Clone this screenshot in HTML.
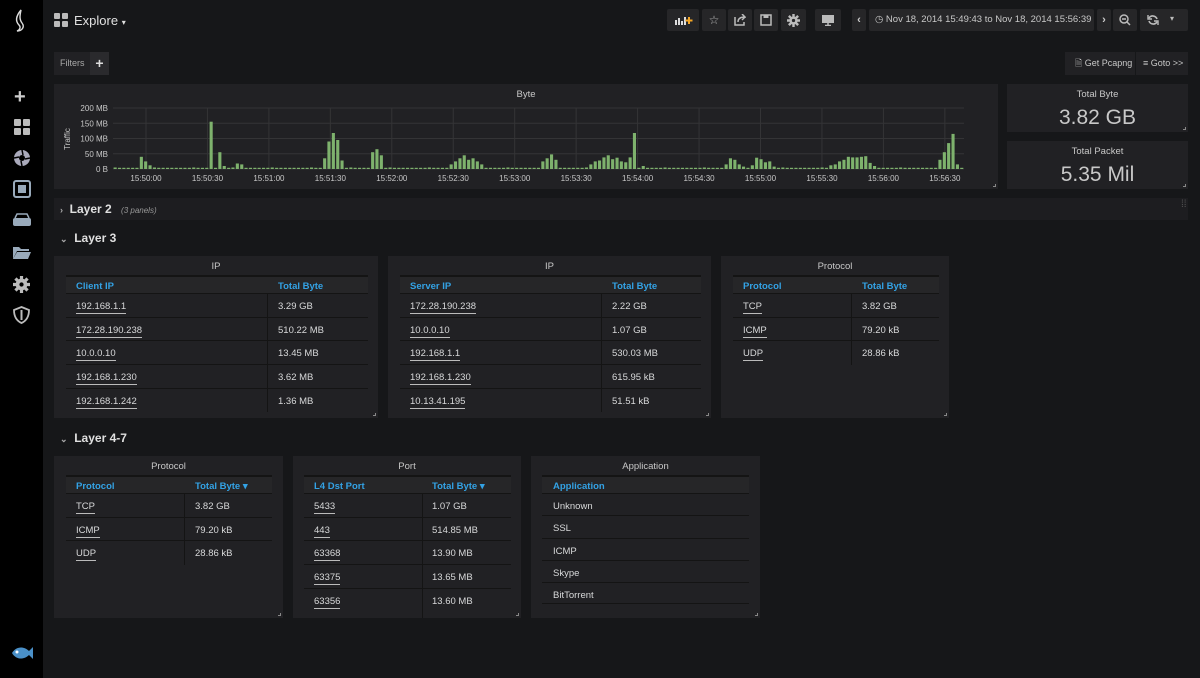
<!DOCTYPE html>
<html><head><meta charset="utf-8">
<style>
*{box-sizing:border-box;margin:0;padding:0}
body{width:1200px;height:678px;background:#161719;font-family:"Liberation Sans",sans-serif;color:#d8d9da;position:relative;overflow:hidden;font-size:10px}
.abs{position:absolute}
.side{left:0;top:0;width:43px;height:678px;background:#000}
.btn{position:absolute;top:9px;height:22px;background:#262628;border-radius:2px}
.panel{position:absolute;background:#212124}
.ptitle{position:absolute;left:0;right:0;top:5px;text-align:center;color:#c8c8c8;font-size:9.5px}
.tbl{position:absolute}
.tbl .h{height:18px;background:#262628;border-top:2px solid #141414;color:#33a2e5;font-size:9.5px;font-weight:bold;position:relative}
.tbl .r{height:23.7px;border-top:1px solid #141414;position:relative;font-size:9.5px;color:#d8d9da}
.tbl span{position:absolute;top:7px}
.u{border-bottom:1px solid #bbb;padding-bottom:1px}
.corner{position:absolute;right:2px;bottom:2px;width:3px;height:3px;border-right:1px solid #888;border-bottom:1px solid #888}
.rowt{position:absolute;font-size:12px;font-weight:bold;color:#e0e0e0}
</style></head><body>
<div class="abs side">
 <svg class="abs" style="left:12px;top:8px" width="18" height="26" viewBox="0 0 18 26"><path d="M9 2 C4 8 3 13 7 17 C9 19 8 22 5 23 C10 23 13 19 10 15 C7 11 8 7 9 2 Z" fill="none" stroke="#ddd" stroke-width="1.4"/></svg>
 <div class="abs" style="left:14px;top:86px;color:#ccc;font-size:20px;font-weight:bold">+</div>
 <svg class="abs" style="left:14px;top:119px" width="16" height="16"><rect x="0" y="0" width="7" height="7" rx="1" fill="#bbb"/><rect x="9" y="0" width="7" height="7" rx="1" fill="#bbb"/><rect x="0" y="9" width="7" height="7" rx="1" fill="#bbb"/><rect x="9" y="9" width="7" height="7" rx="1" fill="#bbb"/></svg>
 <svg class="abs" style="left:13px;top:149px" width="18" height="18"><circle cx="9" cy="9" r="8" fill="#aab"/><circle cx="9" cy="9" r="3" fill="#000"/><path d="M9 1 L10 6 M17 9 L12 10 M9 17 L8 12 M1 9 L6 8" stroke="#000" stroke-width="1.5"/></svg>
 <svg class="abs" style="left:13px;top:180px" width="18" height="18"><rect x="1" y="1" width="16" height="16" rx="2" fill="none" stroke="#9ab" stroke-width="2"/><rect x="5" y="5" width="8" height="8" fill="#9ab"/></svg>
 <svg class="abs" style="left:12px;top:213px" width="20" height="14"><rect x="1" y="5" width="18" height="8" rx="2" fill="#9ab"/><path d="M3 5 L5 1 H15 L17 5" fill="none" stroke="#9ab" stroke-width="1.5"/></svg>
 <svg class="abs" style="left:12px;top:245px" width="20" height="15"><path d="M1 2 H7 L9 4 H17 V6 H5 L1 14 Z" fill="#9ab"/><path d="M5 7 H19 L16 14 H1 Z" fill="#9ab"/></svg>
 <svg class="abs" style="left:13px;top:276px" width="17" height="17" viewBox="0 0 16 16"><circle cx="8" cy="8" r="5.5" fill="#bbb"/><path d="M8 0v16M0 8h16M2.3 2.3l11.4 11.4M13.7 2.3L2.3 13.7" stroke="#bbb" stroke-width="3"/><circle cx="8" cy="8" r="2" fill="#000"/></svg>
 <svg class="abs" style="left:13px;top:306px" width="17" height="18"><path d="M8.5 1 L16 4 C16 11 13 15 8.5 17 C4 15 1 11 1 4 Z" fill="none" stroke="#bbb" stroke-width="1.8"/><path d="M8.5 4 V14" stroke="#bbb" stroke-width="2"/></svg>
 <svg class="abs" style="left:10px;top:643px" width="24" height="20"><path d="M2 10 C6 3 14 3 19 8 L23 4 V16 L19 12 C14 17 6 17 2 10Z" fill="#4a90c8"/><circle cx="7" cy="9" r="1.5" fill="#fff"/></svg>
</div>

<svg class="abs" style="left:54px;top:13px" width="14" height="14"><rect x="0" y="0" width="6" height="6" rx="1" fill="#bbb"/><rect x="8" y="0" width="6" height="6" rx="1" fill="#bbb"/><rect x="0" y="8" width="6" height="6" rx="1" fill="#bbb"/><rect x="8" y="8" width="6" height="6" rx="1" fill="#bbb"/></svg>
<div class="abs" style="left:74px;top:13px;font-size:13px;color:#e0e0e0">Explore <span style="font-size:8px">▾</span></div>

<div class="btn" style="left:667px;width:32px"><svg class="abs" style="left:8px;top:6px" width="18" height="10"><path d="M1 10V5M4 10V3M7 10V6M10 10V2" stroke="#ddd" stroke-width="2"/><path d="M14 2v7M10.5 5.5h7" stroke="#f5a623" stroke-width="2"/></svg></div>
<div class="btn" style="left:702px;width:24px;text-align:center;line-height:22px;color:#bbb;font-size:12px">☆</div>
<div class="btn" style="left:728px;width:24px"><svg class="abs" style="left:6px;top:5px" width="12" height="12"><path d="M1 3V11H10V8" fill="none" stroke="#bbb" stroke-width="1.5"/><path d="M4 8C4 4 7 3 11 3L8 0M11 3L8 6" fill="none" stroke="#bbb" stroke-width="1.5"/></svg></div>
<div class="btn" style="left:754px;width:24px"><svg class="abs" style="left:6px;top:5px" width="12" height="12"><rect x="1" y="1" width="10" height="10" fill="none" stroke="#bbb" stroke-width="1.5"/><rect x="3.5" y="1" width="5" height="3" fill="#bbb"/></svg></div>
<div class="btn" style="left:781px;width:25px"><svg class="abs" style="left:6px;top:5px" width="13" height="13" viewBox="0 0 16 16"><circle cx="8" cy="8" r="5" fill="#bbb"/><path d="M8 0v16M0 8h16M2.3 2.3l11.4 11.4M13.7 2.3L2.3 13.7" stroke="#bbb" stroke-width="3"/><circle cx="8" cy="8" r="2" fill="#262628"/></svg></div>
<div class="btn" style="left:815px;width:26px"><svg class="abs" style="left:6px;top:5px" width="14" height="12"><rect x="1" y="1" width="12" height="8" fill="#bbb"/><path d="M7 9V11M4 11.5H10" stroke="#bbb" stroke-width="1.5"/></svg></div>
<div class="btn" style="left:852px;width:14px;text-align:center;line-height:22px;color:#ccc;font-weight:bold;font-size:11px">‹</div>
<div class="btn" style="left:869px;width:225px;line-height:22px;font-size:9.5px;color:#c8c8c8;padding-left:6px">◷ Nov 18, 2014 15:49:43 to Nov 18, 2014 15:56:39</div>
<div class="btn" style="left:1097px;width:14px;text-align:center;line-height:22px;color:#ccc;font-weight:bold;font-size:11px">›</div>
<div class="btn" style="left:1113px;width:24px"><svg class="abs" style="left:6px;top:5px" width="12" height="12"><circle cx="5" cy="5" r="4" fill="none" stroke="#bbb" stroke-width="1.5"/><path d="M8 8L11 11M3 5H7" stroke="#bbb" stroke-width="1.5"/></svg></div>
<div class="btn" style="left:1140px;width:48px"><svg class="abs" style="left:7px;top:5px" width="12" height="12"><path d="M10 5A4.5 4.5 0 0 0 2 4M2 7A4.5 4.5 0 0 0 10 8" fill="none" stroke="#bbb" stroke-width="1.6"/><path d="M1 1V5H5M11 11V7H7" fill="none" stroke="#bbb" stroke-width="1.4"/></svg><span class="abs" style="left:30px;top:5px;color:#bbb;font-size:8px">▾</span></div>

<div class="abs" style="left:54px;top:52px;width:36px;height:23px;background:#212124;color:#aaa;font-size:9px;line-height:23px;padding-left:6px">Filters</div>
<div class="abs" style="left:90px;top:52px;width:19px;height:23px;background:#2a2a2d;color:#ddd;font-size:14px;font-weight:bold;line-height:22px;text-align:center">+</div>
<div class="abs" style="left:1065px;top:52px;width:123px;height:23px;background:#212124;font-size:9px;color:#c8c8c8;line-height:23px"><span style="margin-left:10px">🗎 Get Pcapng</span><span style="position:absolute;left:70px;top:0;border-left:1px solid #161719;padding-left:7px">≡ Goto &gt;&gt;</span></div>

<div class="panel" style="left:54px;top:84px;width:944px;height:105px">
 <div class="ptitle">Byte</div><div class="corner"></div>
 <svg id="chart" class="abs" style="left:0;top:0" width="944" height="105"></svg>
</div>
<div class="panel" style="left:1007px;top:84px;width:181px;height:48px"><div class="ptitle">Total Byte</div><div class="abs" style="left:0;right:0;top:22px;text-align:center;font-size:21px;color:#c8c8c8">3.82 GB</div><div class="corner"></div></div>
<div class="panel" style="left:1007px;top:141px;width:181px;height:48px"><div class="ptitle">Total Packet</div><div class="abs" style="left:0;right:0;top:22px;text-align:center;font-size:21px;color:#c8c8c8">5.35 Mil</div><div class="corner"></div></div>

<div class="abs" style="left:54px;top:198px;width:1134px;height:22px;background:#1d1d20"></div>
<div class="rowt" style="left:60px;top:202px"><span style="font-size:9px;color:#aaa">›</span>&nbsp;&nbsp;Layer 2 <span style="font-weight:normal;font-style:italic;font-size:8px;color:#999;margin-left:6px">(3 panels)</span></div>
<div class="abs" style="left:1181px;top:203px;color:#555;font-size:10px;line-height:4px">⁞⁞</div>
<div class="rowt" style="left:60px;top:231px"><span style="font-size:9px;color:#aaa">⌄</span>&nbsp;&nbsp;Layer 3</div>

<div class="panel" style="left:54px;top:256px;width:324px;height:162px"><div class="ptitle">IP</div><div class="corner"></div>
 <div class="tbl" style="left:12px;top:19px;width:302px">
  <div class="h"><span style="left:10px;top:4px">Client IP</span><span style="left:212px;top:4px">Total Byte</span></div>
  <div class="r"><span style="left:10px" class="u">192.168.1.1</span><span style="left:212px">3.29 GB</span></div>
  <div class="r"><span style="left:10px" class="u">172.28.190.238</span><span style="left:212px">510.22 MB</span></div>
  <div class="r"><span style="left:10px" class="u">10.0.0.10</span><span style="left:212px">13.45 MB</span></div>
  <div class="r"><span style="left:10px" class="u">192.168.1.230</span><span style="left:212px">3.62 MB</span></div>
  <div class="r"><span style="left:10px" class="u">192.168.1.242</span><span style="left:212px">1.36 MB</span></div>
  <div class="abs" style="left:201px;top:19px;width:1px;height:118px;background:#141414"></div>
 </div></div>
<div class="panel" style="left:388px;top:256px;width:323px;height:162px"><div class="ptitle">IP</div><div class="corner"></div>
 <div class="tbl" style="left:12px;top:19px;width:301px">
  <div class="h"><span style="left:10px;top:4px">Server IP</span><span style="left:212px;top:4px">Total Byte</span></div>
  <div class="r"><span style="left:10px" class="u">172.28.190.238</span><span style="left:212px">2.22 GB</span></div>
  <div class="r"><span style="left:10px" class="u">10.0.0.10</span><span style="left:212px">1.07 GB</span></div>
  <div class="r"><span style="left:10px" class="u">192.168.1.1</span><span style="left:212px">530.03 MB</span></div>
  <div class="r"><span style="left:10px" class="u">192.168.1.230</span><span style="left:212px">615.95 kB</span></div>
  <div class="r"><span style="left:10px" class="u">10.13.41.195</span><span style="left:212px">51.51 kB</span></div>
  <div class="abs" style="left:201px;top:19px;width:1px;height:118px;background:#141414"></div>
 </div></div>
<div class="panel" style="left:721px;top:256px;width:228px;height:162px"><div class="ptitle">Protocol</div><div class="corner"></div>
 <div class="tbl" style="left:12px;top:19px;width:206px">
  <div class="h"><span style="left:10px;top:4px">Protocol</span><span style="left:129px;top:4px">Total Byte</span></div>
  <div class="r"><span style="left:10px" class="u">TCP</span><span style="left:129px">3.82 GB</span></div>
  <div class="r"><span style="left:10px" class="u">ICMP</span><span style="left:129px">79.20 kB</span></div>
  <div class="r"><span style="left:10px" class="u">UDP</span><span style="left:129px">28.86 kB</span></div>
  <div class="abs" style="left:118px;top:19px;width:1px;height:71px;background:#141414"></div>
 </div></div>

<div class="rowt" style="left:60px;top:431px"><span style="font-size:9px;color:#aaa">⌄</span>&nbsp;&nbsp;Layer 4-7</div>

<div class="panel" style="left:54px;top:456px;width:229px;height:162px"><div class="ptitle">Protocol</div><div class="corner"></div>
 <div class="tbl" style="left:12px;top:19px;width:206px">
  <div class="h"><span style="left:10px;top:4px">Protocol</span><span style="left:129px;top:4px">Total Byte ▾</span></div>
  <div class="r"><span style="left:10px" class="u">TCP</span><span style="left:129px">3.82 GB</span></div>
  <div class="r"><span style="left:10px" class="u">ICMP</span><span style="left:129px">79.20 kB</span></div>
  <div class="r"><span style="left:10px" class="u">UDP</span><span style="left:129px">28.86 kB</span></div>
  <div class="abs" style="left:118px;top:19px;width:1px;height:71px;background:#141414"></div>
 </div></div>
<div class="panel" style="left:293px;top:456px;width:228px;height:162px"><div class="ptitle">Port</div><div class="corner"></div>
 <div class="tbl" style="left:11px;top:19px;width:207px">
  <div class="h"><span style="left:10px;top:4px">L4 Dst Port</span><span style="left:128px;top:4px">Total Byte ▾</span></div>
  <div class="r"><span style="left:10px" class="u">5433</span><span style="left:128px">1.07 GB</span></div>
  <div class="r"><span style="left:10px" class="u">443</span><span style="left:128px">514.85 MB</span></div>
  <div class="r"><span style="left:10px" class="u">63368</span><span style="left:128px">13.90 MB</span></div>
  <div class="r"><span style="left:10px" class="u">63375</span><span style="left:128px">13.65 MB</span></div>
  <div class="r"><span style="left:10px" class="u">63356</span><span style="left:128px">13.60 MB</span></div>
  <div class="abs" style="left:118px;top:19px;width:1px;height:124px;background:#141414"></div>
 </div></div>
<div class="panel" style="left:531px;top:456px;width:229px;height:162px"><div class="ptitle">Application</div><div class="corner"></div>
 <div class="tbl" style="left:11px;top:19px;width:207px">
  <div class="h"><span style="left:11px;top:4px">Application</span></div>
  <div class="r" style="height:22.3px"><span style="left:11px">Unknown</span></div>
  <div class="r" style="height:22.3px"><span style="left:11px">SSL</span></div>
  <div class="r" style="height:22.3px"><span style="left:11px">ICMP</span></div>
  <div class="r" style="height:22.3px"><span style="left:11px">Skype</span></div>
  <div class="r" style="height:22.3px;border-bottom:1px solid #141414"><span style="left:11px">BitTorrent</span></div>
 </div></div>

<script>
(function(){
var s=document.getElementById('chart'),h='';
var X0=59,X1=910,Y0=24,Y1=85;
var lab=['200 MB','150 MB','100 MB','50 MB','0 B'];
for(var i=0;i<5;i++){var y=Y0+i*(Y1-Y0)/4;h+='<line x1="'+X0+'" x2="'+X1+'" y1="'+y+'" y2="'+y+'" stroke="#343436"/>';h+='<text x="'+(X0-5)+'" y="'+(y+3)+'" fill="#c8c8c8" font-size="8" text-anchor="end" font-family="Liberation Sans">'+lab[i]+'</text>';}
var tl=['15:50:00','15:50:30','15:51:00','15:51:30','15:52:00','15:52:30','15:53:00','15:53:30','15:54:00','15:54:30','15:55:00','15:55:30','15:56:00','15:56:30'];
for(var i=0;i<14;i++){var x=92+i*61.45;h+='<line x1="'+x+'" x2="'+x+'" y1="'+Y0+'" y2="'+Y1+'" stroke="#343436"/>';h+='<text x="'+x+'" y="'+(Y1+12)+'" fill="#c8c8c8" font-size="8" text-anchor="middle" font-family="Liberation Sans">'+tl[i]+'</text>';}
h+='<text x="16" y="55" fill="#c8c8c8" font-size="8" transform="rotate(-90 16 55)" text-anchor="middle" font-family="Liberation Sans">Traffic</text>';
var pk=[[140,40],[143,25],[146,45],[150,12],[211,155],[216,55],[220,10],[235,18],[240,15],[323,35],[327,90],[330,118],[334,95],[338,28],[371,55],[375,65],[379,45],
[450,15],[454,25],[458,35],[462,45],[466,30],[470,35],[474,25],[478,15],[540,25],[545,35],[549,48],[553,30],[590,15],[594,25],[598,28],[602,38],[606,45],[610,32],[614,37],[618,25],[622,22],[630,38],[634,118],[639,10],
[725,15],[729,35],[733,30],[737,15],[741,8],[749,12],[753,37],[757,40],[761,32],[765,22],[769,25],[773,8],
[830,12],[834,15],[838,25],[842,30],[846,40],[850,38],[854,38],[858,40],[862,42],[866,35],[870,20],[874,10],
[936,30],[940,38],[944,55],[948,85],[952,115],[956,15]];
var n=195,w=(X1-X0)/n;
var v=[];for(var i=0;i<n;i++)v.push(i%9==0?5:4);
pk.forEach(function(p){var i=Math.round((p[0]-54-X0)/w);if(i>=0&&i<n)v[i]=p[1];});
for(var i=0;i<n;i++){var hh=v[i]*0.305;h+='<rect x="'+(X0+i*w+0.6).toFixed(1)+'" y="'+(Y1-hh).toFixed(1)+'" width="'+(w-1.3).toFixed(1)+'" height="'+hh.toFixed(1)+'" fill="#7eb26d"/>';}
s.innerHTML=h;
})();
</script>
</body></html>
